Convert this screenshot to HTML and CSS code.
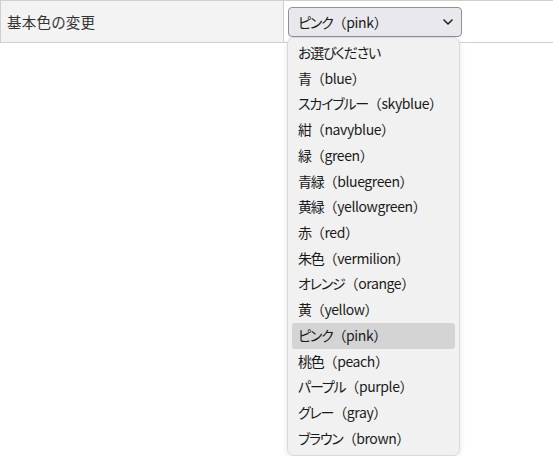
FILE: index.html
```html
<!DOCTYPE html>
<html lang="ja">
<head>
<meta charset="utf-8">
<title>基本色の変更</title>
<link rel="stylesheet" href="styles.css">
</head>
<body>
<div class="page">
<table class="settings">
  <tr>
    <th class="label">基本色の変更</th>
    <td class="value">
      <div class="select">
        <span class="select-text"><span class="ja">ピンク</span>（pink）</span>
        <svg class="chev" width="10" height="6" viewBox="0 0 10 6"><path d="M1 1 L5 5 L9 1" fill="none" stroke="#222" stroke-width="1.6" stroke-linecap="round" stroke-linejoin="round"/></svg>
      </div>
    </td>
  </tr>
</table>
<ul class="menu">
  <li><span class="ja">お選びください</span></li>
  <li><span class="ja">青</span>（blue）</li>
  <li><span class="ja">スカイブルー</span>（skyblue）</li>
  <li><span class="ja">紺</span>（navyblue）</li>
  <li><span class="ja">緑</span>（green）</li>
  <li><span class="ja">青緑</span>（bluegreen）</li>
  <li><span class="ja">黄緑</span>（yellowgreen）</li>
  <li><span class="ja">赤</span>（red）</li>
  <li><span class="ja">朱色</span>（vermilion）</li>
  <li><span class="ja">オレンジ</span>（orange）</li>
  <li><span class="ja">黄</span>（yellow）</li>
  <li class="active"><span class="ja">ピンク</span>（pink）</li>
  <li><span class="ja">桃色</span>（peach）</li>
  <li><span class="ja">パープル</span>（purple）</li>
  <li><span class="ja">グレー</span>（gray）</li>
  <li><span class="ja">ブラウン</span>（brown）</li>
</ul>
</div>
</body>
</html>
```
FILE: styles.css
```css
html, body {
  margin: 0;
  padding: 0;
  background: #ffffff;
}
body {
  font-family: "Noto Sans CJK JP", "Noto Sans", sans-serif;
  color: #222;
}
.page {
  position: relative;
  min-height: 456px;
}
.ja {
  font-feature-settings: "palt";
  letter-spacing: -1.2px;
}
.settings {
  border-collapse: collapse;
  width: 100%;
}
.settings th, .settings td {
  border-top: 1px solid #cfcfcf;
  border-bottom: 1px solid #cfcfcf;
  box-sizing: border-box;
  padding: 0;
  vertical-align: middle;
}
.label {
  width: 283px;
  height: 42px;
  background: #f3f3f3;
  border-left: 1px solid #cfcfcf;
  border-right: 1px solid #cfcfcf;
  text-align: left;
  font-weight: normal;
  font-size: 14.5px;
  font-feature-settings: "palt";
  padding-left: 6px !important;
  color: #333;
  letter-spacing: 0.3px;
}
.value {
  padding: 5px 0 5px 4px !important;
  height: 42px;
}
.select {
  box-sizing: border-box;
  height: 30px;
  width: 174px;
  background: #e9e9ed;
  border: 1px solid #8f8f9d;
  border-radius: 4px;
  display: flex;
  align-items: center;
  justify-content: space-between;
  padding: 0 8px 0 9px;
  font-size: 14px;
  color: #1a1a1a;
  letter-spacing: -0.3px;
}
.chev {
  display: block;
}
.menu {
  position: absolute;
  left: 287px;
  top: 37px;
  width: 173px;
  height: 419px;
  box-sizing: border-box;
  margin: 0;
  padding: 2px 4px 0 4px;
  list-style: none;
  background: #f1f1f1;
  border: 1px solid #dadada;
  border-radius: 7px;
  box-shadow: 0 2px 6px rgba(0,0,0,0.1);
  font-size: 14px;
  color: #1a1a1a;
  letter-spacing: -0.4px;
}
.menu li {
  height: 25.73px;
  line-height: 25.73px;
  padding-left: 6px;
  border-radius: 3px;
  white-space: nowrap;
}
.menu li.active {
  background: #d4d4d4;
}
```
